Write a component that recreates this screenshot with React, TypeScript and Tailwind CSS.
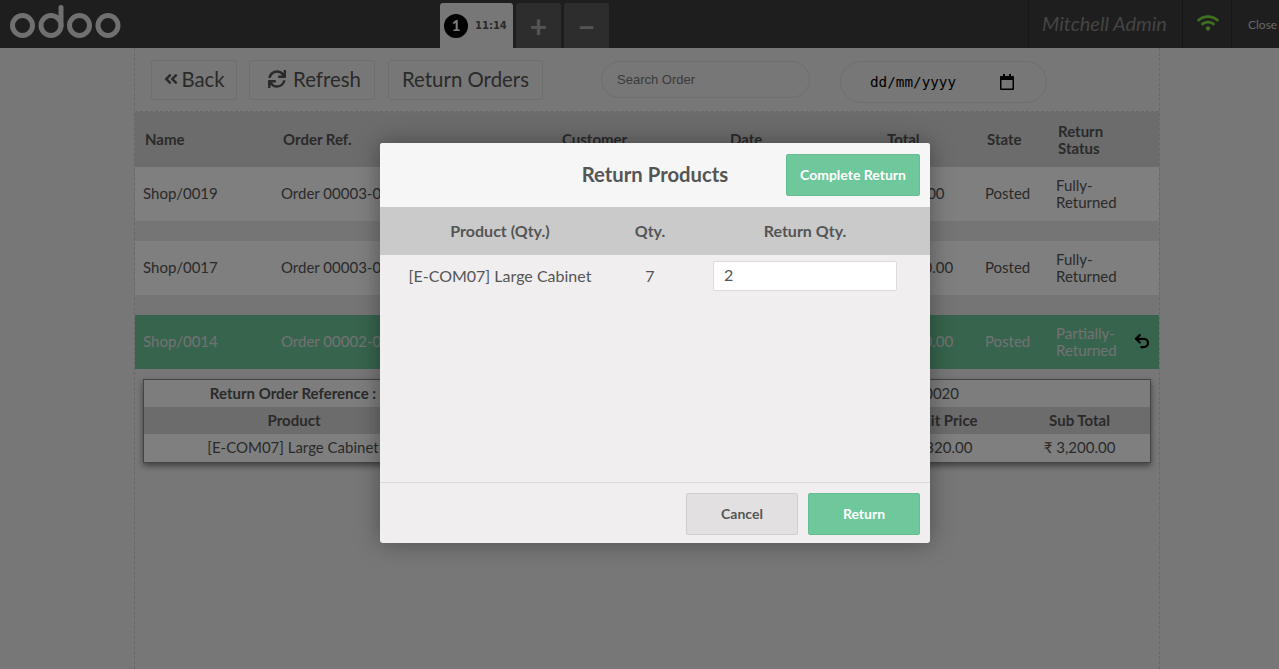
import React from 'react';
import { FaAngleDoubleLeft, FaSync, FaWifi } from 'react-icons/fa';
import { Undo2 } from 'lucide-react';

const orders = [
    { name: 'Shop/0019', ref: 'Order 00003-001-0002', customer: 'Deco Addict', date: '12/05/2021', total: '₹ 320.00', status: 'Fully-Returned' },
    { name: 'Shop/0017', ref: 'Order 00003-001-0001', customer: 'Deco Addict', date: '12/05/2021', total: '₹ 3200.00', status: 'Fully-Returned' },
];

function OdooLogo() {
    return (
        <svg width="122" height="48" viewBox="0 0 122 48" fill="none" stroke="#e0e0e0" strokeWidth="5" className="block">
            <circle cx="22.5" cy="25.5" r="10" />
            <circle cx="51" cy="25.5" r="10" />
            <path d="M61 25.5V7.5" strokeLinecap="round" />
            <circle cx="79.5" cy="25.5" r="10" />
            <circle cx="108" cy="25.5" r="10" />
        </svg>
    );
}

function ToolButton({ children }: { children: React.ReactNode }) {
    return (
        <div className="h-10 pb-0.5 flex items-center justify-center rounded-[3px] border border-[#dcdcdc] text-[20.4px] text-[#555]">
            {children}
        </div>
    );
}

export default function App() {
    return (
        <div className="relative h-[669px] overflow-hidden bg-[#f0eeee] font-['Lato','Liberation_Sans',sans-serif] text-[#555]">
            {/* Top bar */}
            <div className="h-12 bg-[#3c3c3c] flex">
                <div className="w-[440px] shrink-0">
                    <OdooLogo />
                </div>
                <div className="flex gap-[3px] pt-[3px]">
                    <div className="w-[73px] h-[45px] bg-[#f0eeee] rounded-t-[3px] flex items-center pl-1 gap-[7px]">
                        <span className="w-6 h-6 rounded-full bg-black text-white flex items-center justify-center font-bold text-[15px]">1</span>
                        <span className="font-bold text-[#555] font-['DejaVu_Sans',sans-serif] text-[10px]">11:14</span>
                    </div>
                    <div className="w-[45px] h-[45px] bg-[#5a5a5a] rounded-t-[3px] flex items-center justify-center text-[#aaa] font-bold text-[30px] leading-none">+</div>
                    <div className="w-[45px] h-[45px] bg-[#5a5a5a] rounded-t-[3px] flex items-center justify-center text-[#aaa] font-bold text-[30px] leading-none">−</div>
                </div>
                <div className="ml-auto flex">
                    <div className="w-[154px] pr-0.5 pb-0.5 border-l border-[#2c2c2c] flex items-center justify-center italic text-[20px] text-[#888]">Mitchell Admin</div>
                    <div className="w-[49px] pl-0.5 pb-0.5 border-l border-[#2c2c2c] flex items-center justify-center text-[#7ce040]">
                        <FaWifi size={22} />
                    </div>
                    <div className="w-[48px] pt-px border-l border-[#2c2c2c] flex items-center pl-4 text-[12px] text-[#ccc] whitespace-nowrap overflow-hidden">Close</div>
                </div>
            </div>

            {/* Orders screen */}
            <div className="w-[1026px] ml-[134px] h-[621px] border-x border-dashed border-[#d0d0d0]">
                <div className="h-16 border-b border-dashed border-[#d0d0d0] flex pl-[16px] pt-3">
                    <div className="w-[86px] mr-3">
                        <ToolButton>
                            <FaAngleDoubleLeft size={16} className="mr-0.5" />Back
                        </ToolButton>
                    </div>
                    <div className="w-[126px] mr-[13px]">
                        <ToolButton>
                            <span className="flex items-center pl-[5px] gap-[7px]"><FaSync size={18} />Refresh</span>
                        </ToolButton>
                    </div>
                    <div className="w-[155px]">
                        <ToolButton>Return Orders</ToolButton>
                    </div>
                    <input
                        placeholder="Search Order"
                        className="ml-[58px] mt-px w-[209px] h-[37px] rounded-[20px] border border-[#dcdcdc] px-[15px] text-[13px] font-['Liberation_Sans',sans-serif] placeholder:text-[#757575]"
                    />
                    <div className="ml-[30px] mt-px w-[207px] h-[42px] rounded-[21px] border border-[#dcdcdc] flex items-center pl-[29px] pr-[32px] justify-between font-['DejaVu_Sans_Mono',monospace] text-[14.3px] text-black">
                        <span className="pt-0.5">dd/mm/yyyy</span>
                        <svg width="14" height="16" viewBox="0 0 14 16" fill="#000">
                            <path d="M3 0h2v2h4V0h2v2h2a1 1 0 0 1 1 1v12a1 1 0 0 1-1 1H1a1 1 0 0 1-1-1V3a1 1 0 0 1 1-1h2V0zM1.5 6v8.5h11V6h-11z" />
                        </svg>
                    </div>
                </div>

                {/* Order list */}
                <div className="grid grid-cols-[138px_279px_168px_157px_100px_71px_111px] h-[55px] items-center bg-[#d8d8d8] font-bold text-[15px] leading-[17px] [&>div]:pl-2.5">
                    <div>Name</div>
                    <div>Order Ref.</div>
                    <div>Customer</div>
                    <div>Date</div>
                    <div>Total</div>
                    <div>State</div>
                    <div>Return<br />Status</div>
                </div>
                <div className="bg-[#eaeaea] flex flex-col gap-5 pb-5">
                    {orders.map((o) => (
                        <div key={o.name} className="grid grid-cols-[138px_279px_168px_157px_100px_71px_111px] h-[54px] items-center bg-white text-[15px] leading-[17px] [&>div]:pl-2 [&>div]:pb-0.5">
                            <div>{o.name}</div>
                            <div>{o.ref}</div>
                            <div>{o.customer}</div>
                            <div>{o.date}</div>
                            <div>{o.total}</div>
                            <div>Posted</div>
                            <div className="w-[80px] pb-0!">Fully-<br />Returned</div>
                        </div>
                    ))}
                </div>
                <div className="grid grid-cols-[138px_279px_168px_157px_100px_71px_111px] h-[54px] items-center bg-[#6ec89b] text-[#e4e4e4] text-[15px] leading-[17px] [&>div]:pl-2 [&>div]:pb-0.5">
                    <div>Shop/0014</div>
                    <div>Order 00002-001-0001</div>
                    <div>Deco Addict</div>
                    <div>12/05/2021</div>
                    <div>₹ 5600.00</div>
                    <div>Posted</div>
                    <div className="flex items-center justify-between pr-2 pb-0!">
                        <span>Partially-<br />Returned</span>
                        <Undo2 size={18} strokeWidth={3} className="text-black mb-0.5" />
                    </div>
                </div>

                {/* Returned lines for the selected order */}
                <div className="mx-2 mt-2.5 border border-[#888] bg-white text-[15px] text-center shadow-[0_3px_6px_rgba(0,0,0,0.45)]">
                    <div className="grid grid-cols-[300px_212px_212px_141px_141px] h-[27px] items-center bg-[#fbfbfb]">
                        <div className="font-bold pr-0.5">Return Order Reference :</div>
                        <div className="col-span-3 text-right pr-[50px]">Shop/0020</div>
                    </div>
                    <div className="grid grid-cols-[300px_212px_212px_141px_141px] h-[27px] items-center bg-[#d8d8d8] font-bold">
                        <div>Product</div>
                        <div>Qty.</div>
                        <div>Discount</div>
                        <div className="pl-3">Unit Price</div>
                        <div>Sub Total</div>
                    </div>
                    <div className="grid grid-cols-[300px_212px_212px_141px_141px] h-[28px] items-center pb-0.5">
                        <div className="pr-0.5">[E-COM07] Large Cabinet</div>
                        <div>2</div>
                        <div>0</div>
                        <div className="pr-1">₹ 1,320.00</div>
                        <div>₹ 3,200.00</div>
                    </div>
                </div>
            </div>

            {/* Modal backdrop */}
            <div className="absolute inset-0 bg-black/50 flex pl-[380px] pt-[143px]">
                <div className="w-[550px] h-[400px] bg-[#f0eeee] rounded-[3px] flex flex-col overflow-hidden shadow-[0_0_24px_rgba(0,0,0,0.35)]">
                    <div className="relative h-16 pb-0.5 shrink-0 bg-[#f6f6f6] flex items-center justify-center font-bold text-[20.3px]">
                        Return Products
                        <button className="absolute right-2.5 top-[11px] w-[134px] h-[42px] pb-0.5 rounded-[2px] border border-[#65bd90] bg-[#6ec89b] text-white font-bold text-[14px]">
                            Complete Return
                        </button>
                    </div>
                    <div className="grid grid-cols-[240px_60px_250px] h-12 shrink-0 items-center text-center bg-[#cacaca] font-bold text-[16px]">
                        <div>Product (Qty.)</div>
                        <div>Qty.</div>
                        <div>Return Qty.</div>
                    </div>
                    <div className="grid grid-cols-[240px_60px_250px] flex-1 content-start text-center text-[16px] pt-1.5">
                        <div className="pt-[3px]">[E-COM07] Large Cabinet</div>
                        <div className="pt-[3px]">7</div>
                        <div className="flex justify-center">
                            <input defaultValue="2" className="w-[184px] h-[30px] pb-[3px] bg-white border border-[#dcdcdc] rounded-[2px] px-2.5 text-[16px]" />
                        </div>
                    </div>
                    <div className="h-[61px] shrink-0 border-t border-[#d9d9d9] flex justify-end gap-2.5 pt-2.5 pr-2.5 font-bold text-[14px]">
                        <button className="w-[112px] h-[42px] pb-0.5 rounded-[2px] border border-[#cfcfcf] bg-[#e2e0e0]">Cancel</button>
                        <button className="w-[112px] h-[42px] pb-0.5 rounded-[2px] border border-[#65bd90] bg-[#6ec89b] text-white">Return</button>
                    </div>
                </div>
            </div>
        </div>
    );
}
